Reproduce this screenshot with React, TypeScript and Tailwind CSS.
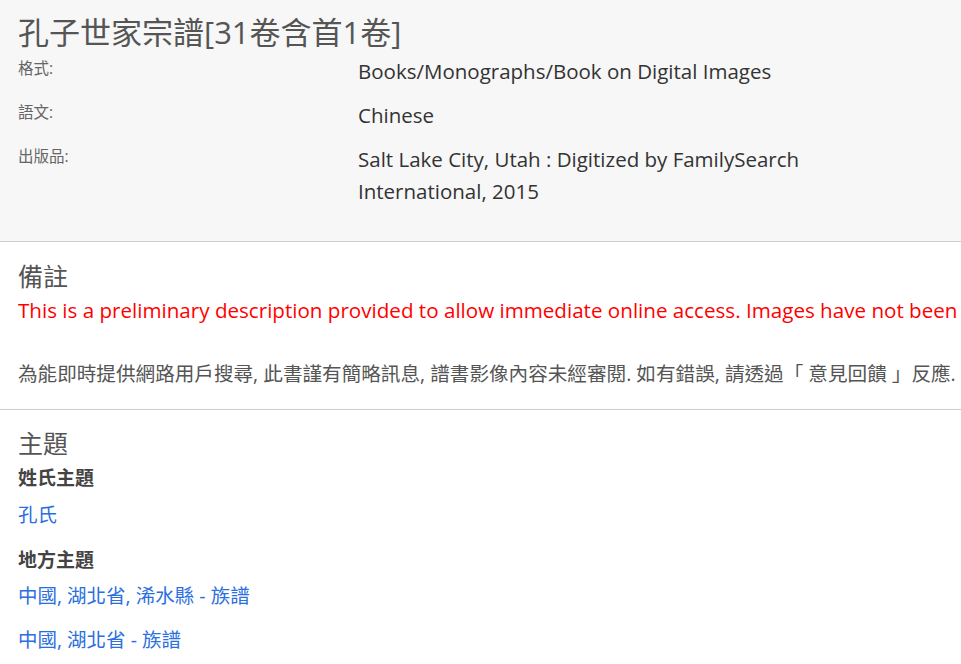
const font = '[font-family:"Open_Sans","Noto_Sans_CJK_TC",sans-serif]';

const details = [
    { label: '格式:', value: ['Books/Monographs/Book on Digital Images'] },
    { label: '語文:', value: ['Chinese'] },
    { label: '出版品:', value: ['Salt Lake City, Utah : Digitized by FamilySearch', 'International, 2015'] },
];

export default function App() {
    return (
        <div className={`w-[961px] h-[664px] overflow-hidden bg-white text-[#333] ${font}`}>
            {/* record header */}
            <section className="bg-[#f7f7f7] border-b border-[#cccccc] px-[18px] pt-[14px] pb-[34px]">
                <h1 className="text-[31px] leading-[36px] text-[#555]">孔子世家宗譜[31卷含首1卷]</h1>
                <div className="mt-[5px] flex flex-col gap-[12px]">
                    {details.map((row) => (
                        <div key={row.label} className="flex">
                            <div className="w-[340px] shrink-0 pt-[3px] text-[15.5px] leading-[20px] text-[#666]">{row.label}</div>
                            <div className="text-[20.5px] leading-[32px] text-[#333]">
                                {row.value.map((line) => (
                                    <div key={line}>{line}</div>
                                ))}
                            </div>
                        </div>
                    ))}
                </div>
            </section>

            {/* notes */}
            <section className="border-b border-[#cccccc] px-[18px] pt-[18px] pb-[21px]">
                <h2 className="text-[25px] leading-[32px] text-[#555]">備註</h2>
                <p className="mt-[4px] whitespace-nowrap text-[20.6px] leading-[28px] text-[#ff0000]">
                    This is a preliminary description provided to allow immediate online access. Images have not been reviewed for completeness.
                </p>
                <p className="mt-[36px] whitespace-nowrap text-[19.6px] leading-[28px] text-[#555]">
                    為能即時提供網路用戶搜尋, 此書謹有簡略訊息, 譜書影像內容未經審閱. 如有錯誤, 請透過「 意見回饋 」反應.
                </p>
            </section>

            {/* subjects */}
            <section className="px-[18px] pt-[17px]">
                <h2 className="text-[25px] leading-[32px] text-[#555]">主題</h2>
                <h3 className="mt-[5px] text-[19px] leading-[28px] font-bold text-[#444]">姓氏主題</h3>
                <a className="mt-[9px] block text-[19.5px] leading-[28px] text-[#2a6fe0]">孔氏</a>
                <h3 className="mt-[17px] text-[19px] leading-[28px] font-bold text-[#444]">地方主題</h3>
                <a className="mt-[8px] block text-[19.5px] leading-[28px] text-[#2a6fe0]">中國, 湖北省, 浠水縣 - 族譜</a>
                <a className="mt-[16px] block text-[19.5px] leading-[28px] text-[#2a6fe0]">中國, 湖北省 - 族譜</a>
            </section>
        </div>
    );
}
